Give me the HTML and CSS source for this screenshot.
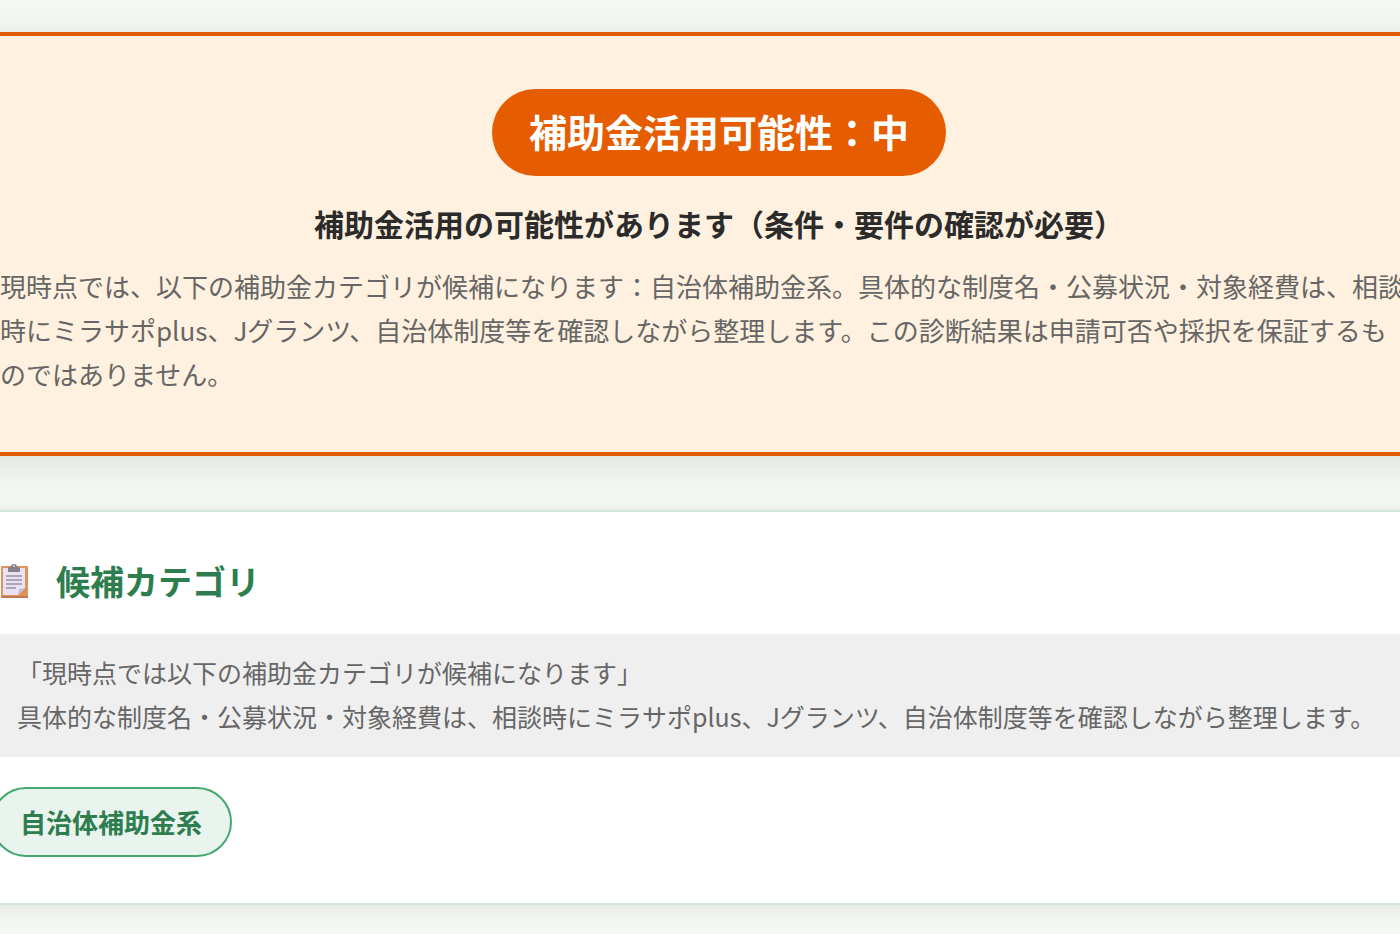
FILE: index.html
```
<!DOCTYPE html>
<html lang="ja">
<head>
    <meta charset="UTF-8">
    <meta name="viewport" content="width=device-width, initial-scale=1.0">
    <title>補助金活用診断</title>
    <link rel="stylesheet" href="styles.css">
</head>
<body>
    <main class="page">
        <section class="card result-card">
            <div class="result-badge">補助金活用可能性：中</div>
            <h1 class="result-title">補助金活用の可能性があります（条件・要件の確認が必要）</h1>
            <p class="result-text">現時点では、以下の補助金カテゴリが候補になります：自治体補助金系。具体的な制度名・公募状況・対象経費は、相談<br>時にミラサポplus、Jグランツ、自治体制度等を確認しながら整理します。この診断結果は申請可否や採択を保証するも<br>のではありません。</p>
        </section>

        <section class="card category-card">
            <h2 class="category-title">
                <svg class="category-icon" viewBox="-1 -1 44 36" aria-hidden="true">
                    <rect x="9" y="2" width="27" height="32" rx="1" fill="#e0935c"/>
                    <path d="M9 32h27v1a1 1 0 0 1-1 1H10a1 1 0 0 1-1-1z" fill="#c47753"/>
                    <path d="M11 4h22v20l-7 7H11z" fill="#e9e2f3"/>
                    <path d="M33 24l-7 7 1-6z" fill="#c9bfd6"/>
                    <path d="M16 7V4q0-1 2-1h1q0-3 3-3t3 3h1q2 0 2 1v3q0 1-1 1H17q-1 0-1-1z" fill="#85808c"/>
                    <circle cx="22" cy="2" r="1" fill="#d7d1df"/>
                    <path d="M14 12h16M14 16h16M14 20h16M14 24h10" stroke="#9992a5" stroke-width="1.300"/>
                </svg>
                候補カテゴリ
            </h2>
            <p class="category-note">「現時点では以下の補助金カテゴリが候補になります」<br>具体的な制度名・公募状況・対象経費は、相談時にミラサポplus、Jグランツ、自治体制度等を確認しながら整理します。</p>
            <div class="tag-list">
                <span class="tag">自治体補助金系</span>
            </div>
        </section>
    </main>
</body>
</html>
```
FILE: styles.css
```
* {
    box-sizing: border-box;
}

body {
    margin: 0;
    background: #f4f9f6;
    color: #2b2b2b;
    font-family: "Noto Sans CJK JP", sans-serif;
    overflow-x: hidden;
}

.page {
    display: flex;
    flex-direction: column;
    gap: 54px;
    padding: 32px 0;
    overflow: hidden;
}

/* カードは画面の左右にはみ出す */
.card {
    margin: 0 -98px 0 -60px;
    padding: 53px 60px 56px;
}

.result-card {
    border: 4px solid #e65c00;
    border-width: 4px 0;
    background: #fff1df;
    box-shadow: 0 8px 38px rgba(0, 0, 0, 0.1);
    text-align: center;
}

.result-badge {
    display: inline-block;
    padding: 0 37px 4px;
    border-radius: 44px;
    background: #e65c00;
    color: #fff;
    font-size: 38px;
    font-weight: 700;
    line-height: 83px;
    vertical-align: top;
}

.result-title {
    margin: 22px 0 16px;
    font-size: 30px;
    font-weight: 700;
    line-height: 50px;
}

.result-text {
    margin: 0;
    color: #666;
    font-size: 26px;
    line-height: 44px;
    text-align: left;
    white-space: nowrap;
}

.category-card {
    margin-left: -69px;
    padding-top: 40px;
    padding-bottom: 46px;
    border: 2px solid #d4e6dc;
    border-width: 2px 0;
    background: #fff;
    box-shadow: 0 4px 22px rgba(0, 0, 0, 0.08);
}

.category-title {
    display: flex;
    align-items: center;
    gap: 21px;
    margin: 0 0 24px;
    color: #2d7d4f;
    font-size: 34px;
    font-weight: 700;
    line-height: 58px;
}

.category-icon {
    width: 44px;
    height: 36px;
}

.category-note {
    margin: 0 0 30px;
    padding: 16px 26px 19px;
    background: #efefef;
    color: #666;
    font-size: 25px;
    line-height: 44px;
}

.tag-list {
    display: flex;
    flex-wrap: wrap;
    gap: 16px;
}

.tag {
    padding: 0 28px 0 27px;
    border: 2px solid #45a870;
    border-radius: 35px;
    background: #e8f4ed;
    color: #2d7d4f;
    font-size: 26px;
    font-weight: 700;
    line-height: 66px;
}
```
